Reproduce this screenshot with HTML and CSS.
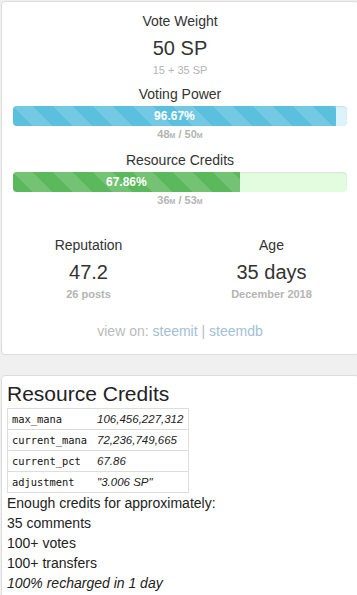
FILE: index.html
```html
<!DOCTYPE html>
<html lang="en">
<head>
  <meta charset="UTF-8">
  <meta name="viewport" content="width=device-width, initial-scale=1.0">
  <title>Account Info</title>
  <link rel="stylesheet" href="styles.css">
</head>
<body>
  <!-- Account summary card -->
  <div class="card summary">
    <div class="stat">
      <div class="stat-label">Vote Weight</div>
      <div class="stat-value">50 SP</div>
      <div class="stat-sub">15 + 35 SP</div>
    </div>

    <div class="stat">
      <div class="stat-label">Voting Power</div>
      <div class="bar bar-vp">
        <div class="bar-fill" style="width: 96.67%;">96.67%</div>
      </div>
      <div class="stat-sub">48<small>M</small> / 50<small>M</small></div>
    </div>

    <div class="stat">
      <div class="stat-label">Resource Credits</div>
      <div class="bar bar-rc">
        <div class="bar-fill" style="width: 67.86%;">67.86%</div>
      </div>
      <div class="stat-sub">36<small>M</small> / 53<small>M</small></div>
    </div>

    <div class="stat-row">
      <div class="stat">
        <div class="stat-label">Reputation</div>
        <div class="stat-value">47.2</div>
        <div class="stat-sub bold">26 posts</div>
      </div>
      <div class="stat">
        <div class="stat-label">Age</div>
        <div class="stat-value">35 days</div>
        <div class="stat-sub bold">December 2018</div>
      </div>
    </div>

    <div class="view-on">view on: <a href="#">steemit</a> | <a href="#">steemdb</a></div>
  </div>

  <!-- Resource credits details -->
  <div class="card rc">
    <h3>Resource Credits</h3>
    <table class="rc-table">
      <tr><td class="key">max_mana</td><td class="val">106,456,227,312</td></tr>
      <tr><td class="key">current_mana</td><td class="val">72,236,749,665</td></tr>
      <tr><td class="key">current_pct</td><td class="val">67.86</td></tr>
      <tr><td class="key">adjustment</td><td class="val">"3.006 SP"</td></tr>
    </table>
    <div class="rc-list">
      <div>Enough credits for approximately:</div>
      <div>35 comments</div>
      <div>100+ votes</div>
      <div>100+ transfers</div>
      <div><em>100% recharged in 1 day</em></div>
    </div>
  </div>
</body>
</html>
```

FILE: styles.css
```css
body {
  font-family: "Liberation Sans", Arial, sans-serif;
  margin: 0;
  padding: 1px 0 0 1px;
  background-color: #f0f0f0;
  color: #333;
  overflow: hidden;
}

.card {
  width: 358px;
  box-sizing: border-box;
  background-color: #fff;
  border: 1px solid #dcdcdc;
  border-radius: 4px;
}

.summary {
  padding: 9px 11px 13px;
  text-align: center;
}

.stat + .stat {
  margin-top: 7px;
}

.stat-label {
  font-size: 14px;
  line-height: 20px;
}

.stat-value {
  font-size: 20px;
  line-height: 24px;
  margin-top: 5px;
}

.stat-sub {
  font-size: 11px;
  line-height: 14px;
  margin-top: 3px;
  color: #b4b4b4;
}

.stat-sub.bold {
  font-weight: bold;
}

.stat-sub small {
  font-size: 7px;
}

/* progress bars */
.bar {
  height: 20px;
  margin: 2px 0 0;
  border-radius: 4px;
  overflow: hidden;
  box-shadow: inset 0 1px 2px rgba(0, 0, 0, 0.08);
}

.bar + .stat-sub {
  margin-top: 1px;
  font-weight: bold;
}

.bar-vp {
  background-color: #dcf3fc;
}

.bar-rc {
  background-color: #e2fce0;
}

.bar-fill {
  height: 100%;
  color: #fff;
  font-size: 12px;
  font-weight: bold;
  line-height: 20px;
  text-align: center;
  background-image: linear-gradient(45deg, rgba(255, 255, 255, 0.15) 25%, transparent 25%, transparent 50%, rgba(255, 255, 255, 0.15) 50%, rgba(255, 255, 255, 0.15) 75%, transparent 75%, transparent);
  background-size: 40px 40px;
}

.bar-vp .bar-fill {
  background-color: #5bc0de;
}

.bar-rc .bar-fill {
  background-color: #5cb85c;
}

.stat-row {
  display: grid;
  grid-template-columns: 1fr 1fr;
  margin: 26px -16px 0;
}

.stat-row .stat + .stat {
  margin-top: 0;
}

.view-on {
  margin-top: 20px;
  font-size: 14px;
  line-height: 20px;
  color: #bbb;
}

.view-on a {
  color: #a3c0d4;
  text-decoration: none;
}

/* resource credits card */
.rc {
  margin-top: 20px;
  padding: 6px 5px 10px;
  font-size: 14px;
  line-height: 20px;
  color: #222;
}

.rc h3 {
  margin: 0 0 2px;
  font-size: 21px;
  font-weight: normal;
  line-height: 24px;
}

.rc-table {
  border-collapse: collapse;
  border: 1px solid #ddd;
}

.rc-table td {
  border-top: 1px solid #ddd;
  padding: 3px 5px 3px 4px;
  line-height: 14px;
}

.rc-table .key {
  font-family: "DejaVu Sans Mono", monospace;
  font-size: 10.4px;
  color: #111;
}

.rc-table .val {
  font-size: 11.5px;
  font-style: italic;
  padding-left: 5px;
}

.rc-list em {
  font-style: italic;
}
```
